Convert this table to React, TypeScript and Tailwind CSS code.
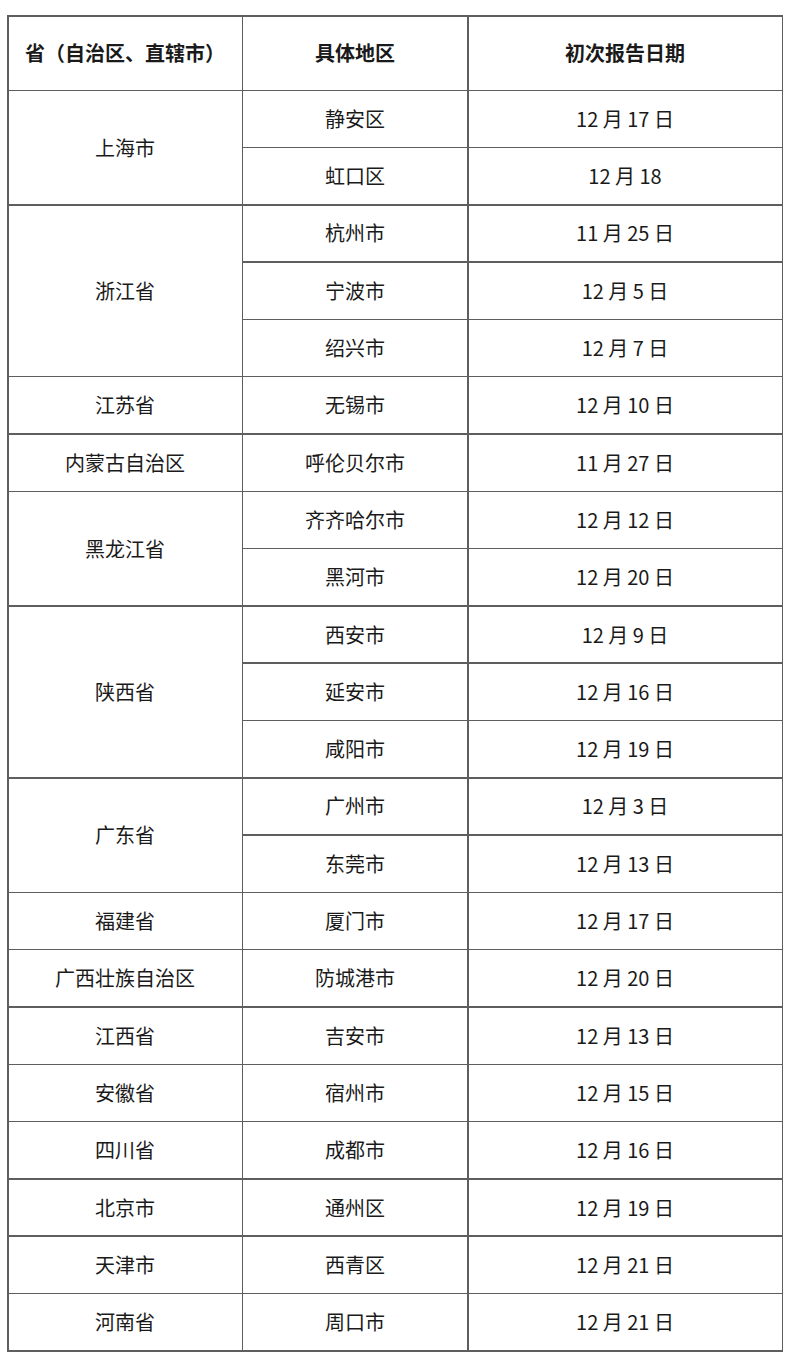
const groups: { prov: string; rows: [string, string][] }[] = [
  { prov: "上海市", rows: [["静安区", "12 月 17 日"], ["虹口区", "12 月 18"]] },
  { prov: "浙江省", rows: [["杭州市", "11 月 25 日"], ["宁波市", "12 月 5 日"], ["绍兴市", "12 月 7 日"]] },
  { prov: "江苏省", rows: [["无锡市", "12 月 10 日"]] },
  { prov: "内蒙古自治区", rows: [["呼伦贝尔市", "11 月 27 日"]] },
  { prov: "黑龙江省", rows: [["齐齐哈尔市", "12 月 12 日"], ["黑河市", "12 月 20 日"]] },
  { prov: "陕西省", rows: [["西安市", "12 月 9 日"], ["延安市", "12 月 16 日"], ["咸阳市", "12 月 19 日"]] },
  { prov: "广东省", rows: [["广州市", "12 月 3 日"], ["东莞市", "12 月 13 日"]] },
  { prov: "福建省", rows: [["厦门市", "12 月 17 日"]] },
  { prov: "广西壮族自治区", rows: [["防城港市", "12 月 20 日"]] },
  { prov: "江西省", rows: [["吉安市", "12 月 13 日"]] },
  { prov: "安徽省", rows: [["宿州市", "12 月 15 日"]] },
  { prov: "四川省", rows: [["成都市", "12 月 16 日"]] },
  { prov: "北京市", rows: [["通州区", "12 月 19 日"]] },
  { prov: "天津市", rows: [["西青区", "12 月 21 日"]] },
  { prov: "河南省", rows: [["周口市", "12 月 21 日"]] },
];

const cell = "bg-white flex items-center justify-center";

export default function App() {
  let row = 2;
  const cells: React.ReactNode[] = [];
  groups.forEach((g, gi) => {
    const start = row;
    const span = g.rows.length;
    // province cell spans all of its district rows
    cells.push(
      <div
        key={`p${gi}`}
        className={cell}
        style={{ gridColumn: 1, gridRow: `${start} / span ${span}` }}
      >
        {g.prov}
      </div>
    );
    g.rows.forEach(([area, date], ri) => {
      cells.push(
        <div key={`a${gi}-${ri}`} className={cell} style={{ gridColumn: 2, gridRow: start + ri }}>
          {area}
        </div>,
        <div key={`d${gi}-${ri}`} className={cell} style={{ gridColumn: 3, gridRow: start + ri }}>
          {date}
        </div>
      );
    });
    row += span;
  });

  return (
    <div className="min-h-screen bg-white pt-[15px] pl-[7px] font-['Noto_Sans_CJK_SC',sans-serif] text-[20px] text-[#1a1a1a]">
      <div className="grid w-fit grid-cols-[233px_224px_313px] grid-rows-[73px_repeat(22,55.8px)] gap-[1.5px] bg-[#5e5e5e] p-[1.5px]">
        <div className={`${cell} font-bold`}>省（自治区、直辖市）</div>
        <div className={`${cell} font-bold`}>具体地区</div>
        <div className={`${cell} font-bold`}>初次报告日期</div>
        {cells}
      </div>
    </div>
  );
}
